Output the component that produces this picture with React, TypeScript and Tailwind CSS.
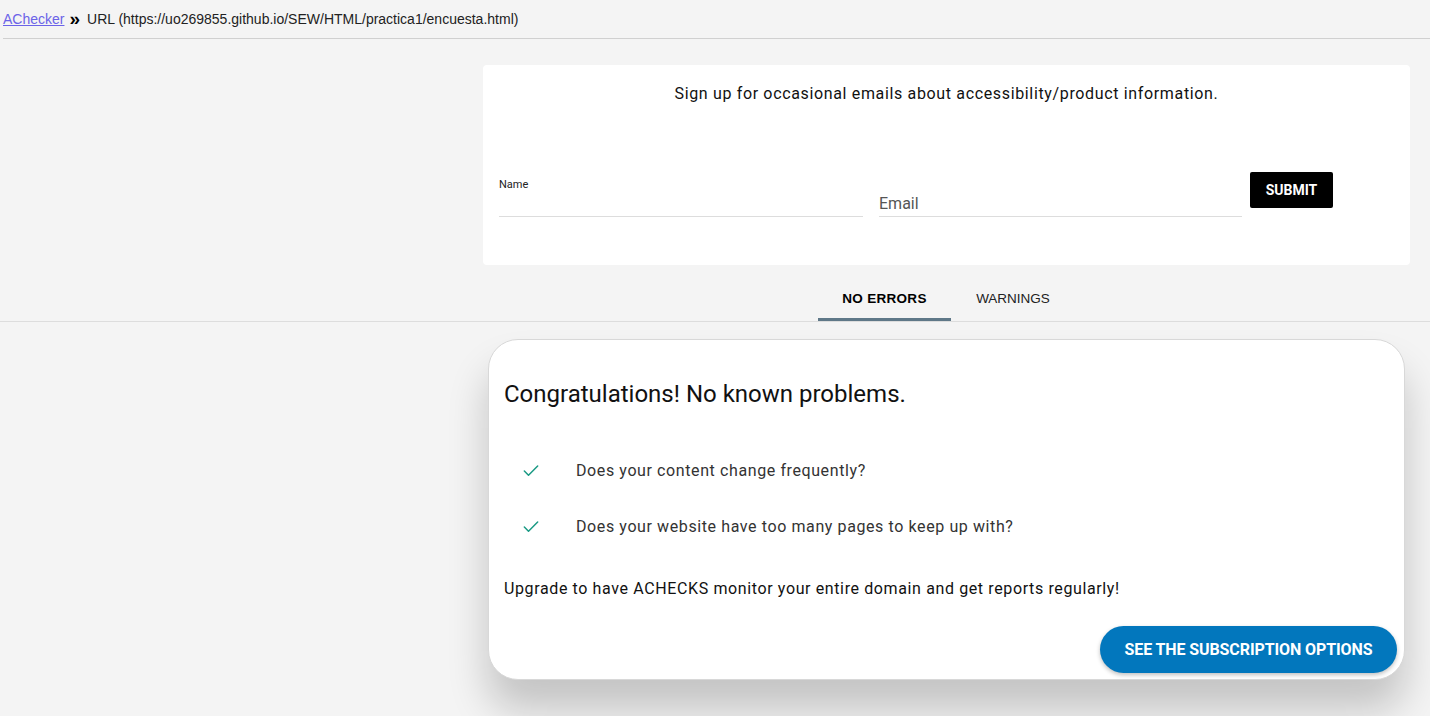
import { Check } from 'lucide-react'

const questions = [
  'Does your content change frequently?',
  'Does your website have too many pages to keep up with?',
]

export default function App() {
  return (
    <div className="min-h-[716px] bg-[#f4f4f4] text-black font-['Roboto',sans-serif]">
      {/* breadcrumb */}
      <div className="ml-[3px] h-[39px] flex items-center text-[14px] font-['Liberation_Sans',Arial,sans-serif] text-[#222] border-b border-[#d0d0d0]">
        <a href="#" className="text-[#6b63e8] underline">AChecker</a>
        <span className="ml-[5px] font-bold text-[19px] leading-none text-black -mt-[2px]">»</span>
        <span className="ml-[7px]">URL (https://uo269855.github.io/SEW/HTML/practica1/encuesta.html)</span>
      </div>

      <div className="flex">
        <div className="w-[483px] shrink-0" />
        <div className="w-[927px]">
          {/* signup */}
          <div className="mt-[26px] h-[200px] bg-white rounded-[4px] px-4 pt-[17px]">
            <p className="text-center text-[16px] tracking-[0.65px] text-[#111]">
              Sign up for occasional emails about accessibility/product information.
            </p>
            <div className="mt-[65px] flex items-start">
              <div className="w-[364px] h-[46px] border-b border-[#ddd] flex flex-col pt-[7px]">
                <div className="text-[11px] text-[#222] leading-[14px]">Name</div>
              </div>
              <div className="ml-4 w-[363px] h-[46px] border-b border-[#ddd] flex items-end pb-[2px]">
                <div className="text-[16px] text-[#555] leading-[20px]">Email</div>
              </div>
              <button className="ml-[8px] mt-[1px] w-[83px] h-[36px] bg-black text-white text-[14px] font-bold rounded-[2px]">
                SUBMIT
              </button>
            </div>
          </div>
        </div>
      </div>

      {/* tabs */}
      <div className="mt-[15px] border-b border-[#ddd]">
        <div className="flex ml-[818px] h-[41px] text-[13.5px] font-['Liberation_Sans',Arial,sans-serif]">
          <div className="w-[133px] flex items-center justify-center font-bold border-b-[3px] border-[#5f7888] tracking-[0.3px]">NO ERRORS</div>
          <div className="w-[124px] flex items-center justify-center text-[#222] pb-[3px]">WARNINGS</div>
        </div>
      </div>

      {/* result card */}
      <div className="flex">
        <div className="w-[488px] shrink-0" />
        <div className="mt-[17px] w-[917px] h-[341px] bg-white rounded-[30px] border border-[#d8d8d8] shadow-[0_30px_40px_rgba(0,0,0,0.2)] px-[15px] pt-[38px]">
          <h2 className="text-[24px] text-[#111] leading-[32px]">Congratulations! No known problems.</h2>
          <ul className="mt-[52px] flex flex-col gap-[38px]">
            {questions.map(q => (
              <li key={q} className="flex items-center h-[18px]">
                <Check className="ml-[17px] w-[20px] h-[20px] text-[#1a9a84]" strokeWidth={1.8} />
                <span className="ml-[35px] text-[16px] tracking-[0.6px] text-[#333]">{q}</span>
              </li>
            ))}
          </ul>
          <p className="mt-[41px] text-[16px] tracking-[0.62px] text-[#111]">
            Upgrade to have ACHECKS monitor your entire domain and get reports regularly!
          </p>
          <div className="flex justify-end mt-[25px] -mr-[8px]">
            <button className="w-[297px] h-[47px] rounded-full bg-[#0277bd] text-white text-[16px] font-bold tracking-[-0.1px] shadow-[0_2px_4px_rgba(0,0,0,0.25)]">
              SEE THE SUBSCRIPTION OPTIONS
            </button>
          </div>
        </div>
      </div>
    </div>
  )
}
